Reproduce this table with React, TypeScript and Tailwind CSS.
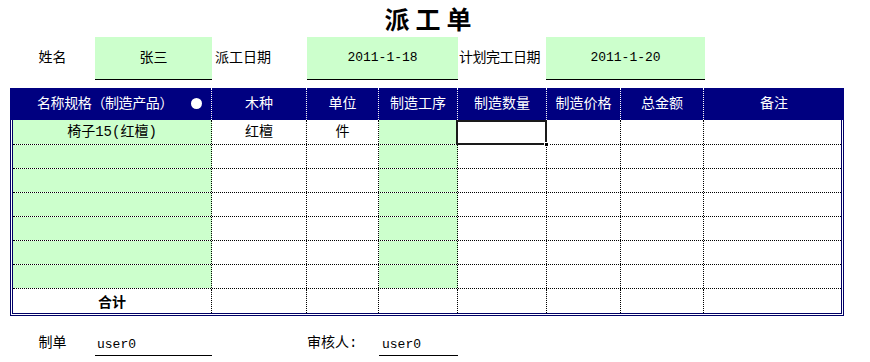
import React from "react";

const headers = [
  { label: "名称规格（制造产品）", w: "w-[202px]" },
  { label: "木种", w: "w-[95px]" },
  { label: "单位", w: "w-[72px]" },
  { label: "制造工序", w: "w-[79px]" },
  { label: "制造数量", w: "w-[89px]" },
  { label: "制造价格", w: "w-[74px]" },
  { label: "总金额", w: "w-[83px]" },
  { label: "备注", w: "w-[140px]" },
];

const bodyWidths = [
  "w-[199px]",
  "w-[95px]",
  "w-[72px]",
  "w-[79px]",
  "w-[89px]",
  "w-[74px]",
  "w-[83px]",
  "w-[137px]",
];

const rows: string[][] = [
  ["椅子15(红檀)", "红檀", "件", "", "", "", "", ""],
  ["", "", "", "", "", "", "", ""],
  ["", "", "", "", "", "", "", ""],
  ["", "", "", "", "", "", "", ""],
  ["", "", "", "", "", "", "", ""],
  ["", "", "", "", "", "", "", ""],
  ["", "", "", "", "", "", "", ""],
  ["合计", "", "", "", "", "", "", ""],
];

const font = "font-['Liberation_Mono','Noto_Sans_CJK_SC',monospace]";

export default function App() {
  return (
    <div className={`w-[870px] h-[362px] bg-white text-black text-[14px] ${font}`}>
      {/* title */}
      <div className="ml-[10px] w-[834px] h-[37px] flex items-center justify-center">
        <span className="text-[25px] font-bold tracking-[6px] font-['Noto_Sans_CJK_SC',serif] pl-[8px]">
          派工单
        </span>
      </div>

      {/* top form */}
      <div className="ml-[10px] flex h-[43px]">
        <div className="w-[85px] flex items-center justify-center">姓名</div>
        <div className="w-[117px] bg-[#ccffcc] border-b border-black flex items-center justify-center">
          张三
        </div>
        <div className="w-[95px] flex items-center pl-[3px]">派工日期</div>
        <div className="w-[151px] bg-[#ccffcc] border-b border-black flex items-center justify-center text-[13px]">
          2011-1-18
        </div>
        <div className="w-[88px] flex items-center pl-[1px] tracking-[-0.5px]">计划完工日期</div>
        <div className="w-[159px] bg-[#ccffcc] border-b border-black flex items-center justify-center text-[13px]">
          2011-1-20
        </div>
      </div>

      {/* table */}
      <div className="ml-[10px] mt-[8px] w-[834px]">
        <div className="flex h-[32px] bg-[#000080] text-white">
          {headers.map((h, i) => (
            <div
              key={h.label}
              className={`${h.w} flex items-center ${
                i === 0 ? "relative justify-start pl-[27px] tracking-[-0.4px]" : "justify-center"
              } ${i < headers.length - 1 ? "border-r border-dotted border-white" : ""}`}
            >
              {h.label}
              {i === 0 && (
                <span className="absolute right-[9px] top-[10px] w-[11px] h-[11px] rounded-full bg-white" />
              )}
            </div>
          ))}
        </div>
        <div className="border-[3px] border-t-0 border-double border-[#000066]">
          {rows.map((row, r) => (
            <div
              key={r}
              className={`flex ${r === 0 ? "h-[25px]" : "h-[24px]"} ${
                r < rows.length - 1 ? "border-b border-dotted border-black" : ""
              }`}
            >
              {row.map((cell, c) => {
                const green = r < 7 && (c === 0 || c === 3);
                const selected = r === 0 && c === 4;
                return (
                  <div
                    key={c}
                    className={`${bodyWidths[c]} flex items-center justify-center ${
                      green ? "bg-[#ccffcc]" : "bg-white"
                    } ${c < row.length - 1 ? "border-r border-dotted border-black" : ""} ${
                      selected ? "relative" : ""
                    } ${r === 7 && c === 0 ? "font-bold font-['Noto_Sans_CJK_SC',sans-serif]" : ""}`}
                  >
                    {cell}
                    {selected && (
                      <>
                        <span className="absolute left-[-2px] top-0 right-[-1px] bottom-[-1px] border-2 border-[#1a1a1a]" />
                        <span className="absolute right-[-3px] bottom-[-3px] w-[5px] h-[5px] bg-black border border-white" />
                      </>
                    )}
                  </div>
                );
              })}
            </div>
          ))}
        </div>
      </div>

      {/* footer */}
      <div className="ml-[10px] mt-[18px] flex h-[22px] items-end">
        <div className="w-[85px] flex items-center justify-center pb-[2px]">制单</div>
        <div className="w-[117px] border-b border-black pl-[2px] pb-[1px] text-[13px]">user0</div>
        <div className="w-[95px]" />
        <div className="w-[72px] pb-[2px]">审核人:</div>
        <div className="w-[79px] border-b border-black pl-[3px] pb-[1px] text-[13px]">user0</div>
      </div>
    </div>
  );
}
